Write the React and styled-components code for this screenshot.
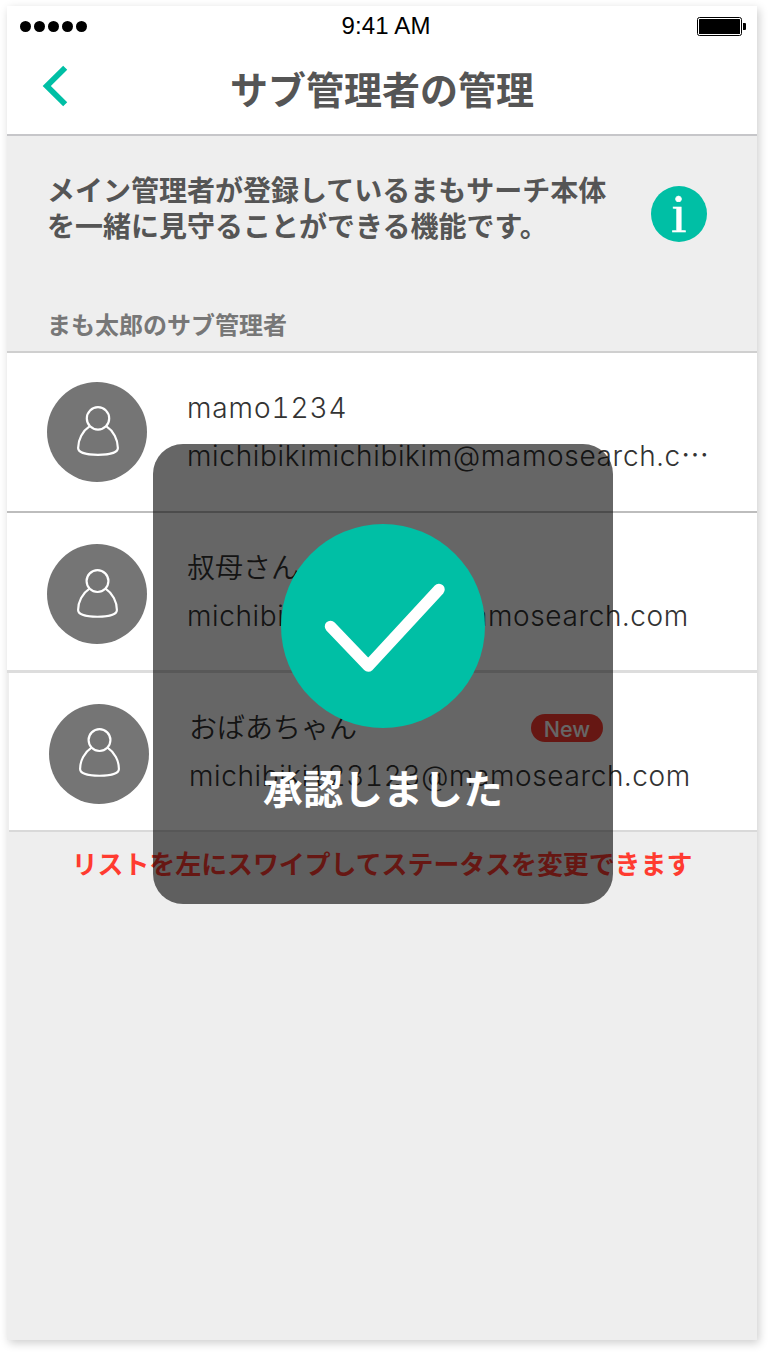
import React from 'react';
import styled, { createGlobalStyle } from 'styled-components';

const TEAL = '#00bfa5';
const JP = "'Noto Sans CJK JP', sans-serif";

const GlobalStyle = createGlobalStyle`
  *, *::before, *::after { box-sizing: border-box; }
  body {
    margin: 0;
    background: #fff;
    font-family: ${JP};
  }
`;

const Stage = styled.div`
  width: 768px;
  height: 1352px;
  padding: 6px 0 0 7px;
  overflow: hidden;
`;

const Phone = styled.div`
  position: relative;
  display: flex;
  flex-direction: column;
  width: 750px;
  height: 1334px;
  background: #eee;
  box-shadow: 2px 3px 9px rgba(0, 0, 0, 0.2);
`;

const Header = styled.header`
  height: 130px;
  background: #fff;
  border-bottom: 2px solid #c6c6c9;
`;

const StatusBar = styled.div`
  display: grid;
  grid-template-columns: 1fr auto 1fr;
  align-items: center;
  height: 40px;
  padding: 0 10px 0 13px;
`;

const Signal = styled.div`
  display: flex;
  gap: 3px;
`;

const SignalDot = styled.i`
  width: 11px;
  height: 11px;
  border-radius: 50%;
  background: #000;
`;

const Clock = styled.time`
  padding-left: 5px;
  font: 24px/40px 'Liberation Sans', sans-serif;
  letter-spacing: 0.15px;
  color: #000;
`;

const Battery = styled.svg`
  justify-self: end;
  display: block;
`;

const NavBar = styled.div`
  display: grid;
  grid-template-columns: 100px 1fr 100px;
  align-items: start;
  height: 88px;
`;

const BackButton = styled.button`
  display: flex;
  height: 88px;
  padding: 19px 0 0 35px;
  border: 0;
  background: none;
`;

const Title = styled.h1`
  margin: 0;
  text-align: center;
  font-size: 38px;
  line-height: 84px;
  font-weight: 700;
  color: #555;
`;

const Intro = styled.section`
  display: flex;
  justify-content: space-between;
  height: 162px;
  padding: 35px 50px 0 40px;
`;

const IntroText = styled.p`
  margin: 0;
  font-size: 28px;
  line-height: 36px;
  font-weight: 700;
  color: #555;
  white-space: nowrap;
`;

const InfoBadge = styled.span`
  width: 56px;
  height: 56px;
  margin-top: 15px;
  border-radius: 50%;
  background: ${TEAL};
  color: #fff;
  text-align: center;
  font: 55px/56px 'Liberation Serif', serif;
  -webkit-text-stroke: 0.5px #fff;
`;

const SectionTitle = styled.h2`
  height: 53px;
  margin: 0;
  padding-left: 40px;
  font-size: 24px;
  line-height: 51px;
  font-weight: 700;
  color: #777;
`;

const List = styled.ul`
  margin: 0;
  padding: 0;
  list-style: none;
  border-top: 2px solid #cfcfcf;
`;

const Row = styled.li`
  display: flex;
  align-items: flex-start;
  height: ${(p) => p.$height}px;
  margin-left: ${(p) => p.$inset || 0}px;
  padding-left: 40px;
  background: #fff;
  border-bottom: ${(p) => p.$line};
`;

const Avatar = styled.div`
  flex: none;
  display: flex;
  justify-content: center;
  width: 100px;
  height: 100px;
  margin-top: ${(p) => p.$top}px;
  padding: ${(p) => p.$iconTop}px 0 0 ${(p) => p.$iconLeft}px;
  border-radius: 50%;
  background: #757575;
`;

const Details = styled.div`
  width: 540px;
  margin-left: 40px;
  padding-top: 29px;
  color: #333;
  font-size: 28px;
  font-weight: 350;
  line-height: 48px;
  white-space: nowrap;
`;

const NameLine = styled.div`
  display: flex;
  align-items: center;
  justify-content: space-between;
  width: 416px;
  height: 48px;
  padding-top: ${(p) => p.$drop || 0}px;
`;

const Latin = styled.span`
  font-family: Inter, sans-serif;
  font-weight: 350;
  font-variant-numeric: tabular-nums;
  letter-spacing: ${(p) => p.$track || 0}px;
`;

const Email = styled.div`
  height: 48px;
`;

const NewTag = styled.span`
  width: 72px;
  height: 28px;
  margin: 3px 2px 0 0;
  border-radius: 14px;
  background: #ff3b30;
  color: #fff;
  text-align: center;
  font: 500 21.5px/30px Inter, sans-serif;
`;

const Hint = styled.p`
  margin: 0;
  padding: 7px 0 0 0;
  text-align: center;
  font-size: 25.9px;
  line-height: 48px;
  font-weight: 700;
  color: #ff3b30;
`;

const Toast = styled.div`
  position: absolute;
  left: 146px;
  top: 438px;
  display: flex;
  flex-direction: column;
  align-items: center;
  width: 460px;
  height: 460px;
  padding-top: 80px;
  border-radius: 30px;
  background: rgba(0, 0, 0, 0.6);
`;

const CheckCircle = styled.div`
  width: 204px;
  height: 204px;
  border-radius: 50%;
  background: ${TEAL};
`;

const ToastText = styled.p`
  margin: 29px 0 0;
  font-size: 40px;
  line-height: 60px;
  font-weight: 700;
  color: #fff;
`;

function PersonIcon({ size }) {
  return (
    <svg width={size} height={size * 1.19} viewBox="0 0 42 50" fill="none" stroke="#fff" strokeWidth="2.2">
      <circle cx="21" cy="12.4" r="11.2" />
      <path d="M12.8 20.2C5.5 25 1.1 33.5 1.1 42C1.1 46.5 9.5 48.9 21 48.9S40.9 46.5 40.9 42C40.9 33.5 36.5 25 29.2 20.2" />
    </svg>
  );
}

const members = [
  { name: <Latin $track={0.9}>mamo1234</Latin>, email: 'michibikimichibikim@mamosearch.c', drop: 2, track: 0.67, clipped: true, height: 160, line: '2px solid #bdbdbd', avatarTop: 29, icon: 42, iconTop: 24, iconLeft: 2 },
  { name: '叔母さん', email: 'michibiki123123@mamosearch.com', track: 0.61, height: 160, line: '3px solid #ddd', avatarTop: 31, icon: 41, iconTop: 25, iconLeft: 0 },
  { name: 'おばあちゃん', email: 'michibiki123123@mamosearch.com', track: 0.61, isNew: true, inset: 2, height: 159, line: '2px solid #d9d9d9', avatarTop: 31, icon: 41, iconTop: 24, iconLeft: 0 },
];

export default function App() {
  return (
    <Stage lang="ja">
      <GlobalStyle />
      <Phone>
        <Header>
          <StatusBar>
            <Signal>
              {[0, 1, 2, 3, 4].map((n) => <SignalDot key={n} />)}
            </Signal>
            <Clock>9:41 AM</Clock>
            <Battery width="50" height="19" viewBox="0 0 50 19">
              <rect x="0.5" y="0.5" width="44" height="18" rx="2" fill="none" stroke="#000" />
              <rect x="2" y="2" width="41" height="15" rx="0.6" />
              <path d="M46 6h2q1 0 1 1v5q0 1-1 1h-2z" />
            </Battery>
          </StatusBar>
          <NavBar>
            <BackButton aria-label="戻る">
              <svg width="28" height="42" viewBox="0 0 28 42" fill="none" stroke={TEAL} strokeWidth="5.8">
                <path d="M23.2 2.8L4.8 21L23.2 39.2" />
              </svg>
            </BackButton>
            <Title>サブ管理者の管理</Title>
          </NavBar>
        </Header>
        <Intro>
          <IntroText>
            メイン管理者が登録しているまもサーチ本体
            <br />
            を一緒に見守ることができる機能です。
          </IntroText>
          <InfoBadge>i</InfoBadge>
        </Intro>
        <SectionTitle>まも太郎のサブ管理者</SectionTitle>
        <List>
          {members.map((m, i) => (
            <Row key={i} $height={m.height} $line={m.line} $inset={m.inset}>
              <Avatar $top={m.avatarTop} $iconTop={m.iconTop} $iconLeft={m.iconLeft}>
                <PersonIcon size={m.icon} />
              </Avatar>
              <Details>
                <NameLine $drop={m.drop}>
                  <span>{m.name}</span>
                  {m.isNew && <NewTag>New</NewTag>}
                </NameLine>
                <Email>
                  <Latin $track={m.track}>{m.email}</Latin>
                  {m.clipped && '⋯'}
                </Email>
              </Details>
            </Row>
          ))}
        </List>
        <Hint>リストを左にスワイプしてステータスを変更できます</Hint>
        <Toast role="status">
          <CheckCircle>
            <svg width="204" height="204" viewBox="0 0 204 204" fill="none" stroke="#fff" strokeWidth="11.5" strokeLinecap="round" strokeLinejoin="round">
              <path d="M49.5 102.5L87.3 142L158 65.5" />
            </svg>
          </CheckCircle>
          <ToastText>承認しました</ToastText>
        </Toast>
      </Phone>
    </Stage>
  );
}
